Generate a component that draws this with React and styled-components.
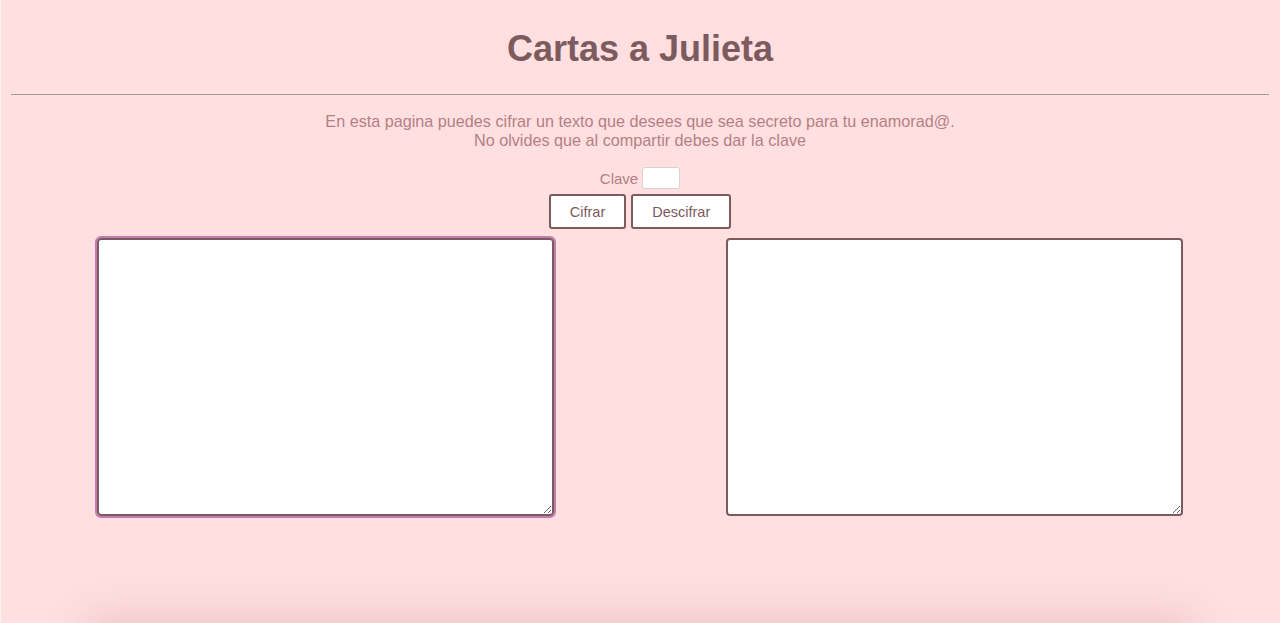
import React, { useState } from 'react';
import styled, { createGlobalStyle } from 'styled-components';

const GlobalStyle = createGlobalStyle`
  html, body {
    margin: 0;
    padding: 0;
    background-color: #ffdfe0;
    font-family: "Liberation Sans", Arial, sans-serif;
    overflow: hidden;
  }
`;

export default function App() {
  const [clave, setClave] = useState('');
  const [entrada, setEntrada] = useState('');
  const [salida, setSalida] = useState('');

  return (
    <>
      <GlobalStyle />
      <Page>
        <Title>Cartas a Julieta</Title>
        <Divider />
        <Intro>
          En esta pagina puedes cifrar un texto que desees que sea secreto para tu enamorad@.
          <br />
          No olvides que al compartir debes dar la clave
        </Intro>
        <KeyRow>
          <KeyLabel htmlFor="clave">Clave</KeyLabel>
          <KeyInput id="clave" value={clave} onChange={(e) => setClave(e.target.value)} />
        </KeyRow>
        <ButtonRow>
          <ActionButton>Cifrar</ActionButton>
          <ActionButton>Descifrar</ActionButton>
        </ButtonRow>
        <TextAreas>
          <Column>
            <TextBox focused value={entrada} onChange={(e) => setEntrada(e.target.value)} />
          </Column>
          <Column>
            <TextBox value={salida} onChange={(e) => setSalida(e.target.value)} />
          </Column>
        </TextAreas>
        <Footer />
      </Page>
    </>
  );
}

const Page = styled.div`
  height: 623px;
  box-sizing: border-box;
  padding: 0 11px 0 10px;
  border-left: 1px solid #ffeeee;
  display: flex;
  flex-direction: column;
  align-items: stretch;
  overflow: hidden;
`;

const Title = styled.h1`
  margin: 28px 0 24px 0;
  font-size: 36px;
  line-height: 42px;
  font-weight: bold;
  text-align: center;
  color: #7d5a5e;
`;

const Divider = styled.hr`
  margin: 0;
  border: none;
  border-top: 1px solid #9c9c9c;
  height: 0;
`;

const Intro = styled.p`
  margin: 17px 0 0 0;
  font-size: 16.2px;
  line-height: 19px;
  text-align: center;
  color: #b47f84;
`;

const KeyRow = styled.div`
  margin-top: 17px;
  display: flex;
  justify-content: center;
  align-items: center;
  gap: 4px;
`;

const KeyLabel = styled.label`
  font-size: 15px;
  color: #b47f84;
`;

const KeyInput = styled.input`
  width: 38px;
  height: 22px;
  box-sizing: border-box;
  border: 1px solid #d9d0d1;
  border-radius: 3px;
  background: #ffffff;
  outline: none;
  padding: 0 3px;
`;

const ButtonRow = styled.div`
  margin-top: 5px;
  display: flex;
  justify-content: center;
  gap: 5px;
`;

const ActionButton = styled.button`
  height: 35px;
  padding: 0 19px;
  box-sizing: border-box;
  border: 2px solid #7d5a5e;
  border-radius: 3px;
  background: #ffffff;
  color: #7d5a5e;
  font-family: "Liberation Sans", Arial, sans-serif;
  font-size: 14.5px;
  cursor: pointer;
`;

const TextAreas = styled.div`
  margin-top: 9px;
  display: grid;
  grid-template-columns: 1fr 1fr;
`;

const Column = styled.div`
  display: flex;
  justify-content: center;
`;

const TextBox = styled.textarea`
  width: 457px;
  height: 278px;
  box-sizing: border-box;
  border: 2px solid #7d5a5e;
  border-radius: 4px;
  background: #ffffff;
  resize: both;
  outline: ${(props) => (props.focused ? '2px solid #c47ab4' : 'none')};
  outline-offset: 0;
  font-family: "Liberation Mono", monospace;
`;

const Footer = styled.div`
  flex-shrink: 0;
  margin: auto 80px -40px 80px;
  height: 40px;
  box-shadow: 0 0 40px 4px rgba(190, 130, 130, 0.3);
`;
